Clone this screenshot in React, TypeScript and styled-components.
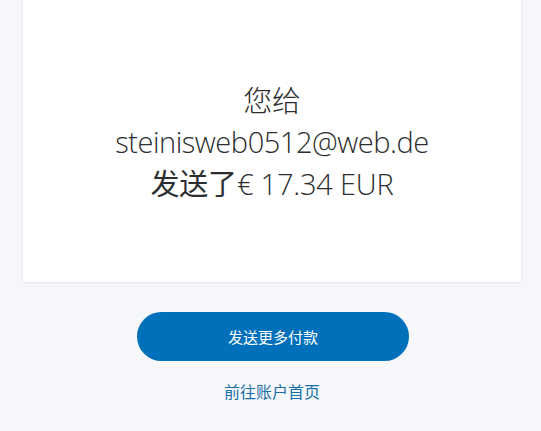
import React from "react";
import styled, { createGlobalStyle } from "styled-components";

const Global = createGlobalStyle`
  html, body { margin: 0; padding: 0; background: #f5f7fa; }
  body { font-family: "Open Sans", "Noto Sans CJK SC", sans-serif; }
`;

const Page = styled.div`
  display: flex;
  flex-direction: column;
  align-items: center;
  min-height: 431px;
  padding-left: 3px;
`;

const Card = styled.div`
  box-sizing: border-box;
  width: 498px;
  height: 282px;
  background: #ffffff;
  box-shadow: 0 1px 2px rgba(0, 0, 0, 0.06), 0 0 0 1px rgba(0, 0, 0, 0.02);
  display: flex;
  flex-direction: column;
  align-items: center;
  justify-content: flex-start;
  padding-top: 79px;
`;

const Line = styled.div<{ $tight?: boolean }>`
  font-size: 29px;
  line-height: 41px;
  color: #2c2e2f;
  font-weight: 300;
  text-align: center;
  white-space: nowrap;
  letter-spacing: ${(p) => (p.$tight ? "-0.45px" : "-0.2px")};
`;

const Cjk = styled.span<{ $strong?: boolean }>`
  font-family: "Noto Sans CJK SC", sans-serif;
  font-weight: ${(p) => (p.$strong ? 400 : 300)};
  font-size: 29px;
`;

const Button = styled.button`
  margin-top: 30px;
  margin-left: 2px;
  width: 272px;
  height: 49px;
  border: none;
  border-radius: 25px;
  background: #0070ba;
  color: #ffffff;
  font-family: "Noto Sans CJK SC", sans-serif;
  font-size: 15px;
  font-weight: 400;
  cursor: pointer;
`;

const Link = styled.a`
  margin-top: 18px;
  font-family: "Noto Sans CJK SC", sans-serif;
  font-size: 16px;
  color: #1a6fa6;
  text-decoration: none;
  line-height: 24px;
`;

export default function App() {
  return (
    <>
      <Global />
      <Page>
        <Card>
          <Line><Cjk>您给</Cjk></Line>
          <Line $tight>steinisweb0512@web.de</Line>
          <Line>
            <Cjk $strong>发送了</Cjk>€ 17.34 EUR
          </Line>
        </Card>
        <Button>发送更多付款</Button>
        <Link href="#">前往账户首页</Link>
      </Page>
    </>
  );
}
